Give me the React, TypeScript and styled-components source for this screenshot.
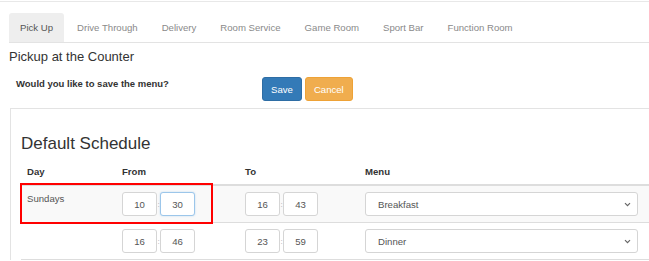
import React from 'react';
import styled, { createGlobalStyle, css } from 'styled-components';

const GlobalStyle = createGlobalStyle`
  html, body {
    margin: 0;
    padding: 0;
    background: #fff;
    overflow: hidden;
  }

  body {
    color: #333;
    font-family: "Liberation Sans", Arial, sans-serif;
    font-size: 9.6px;
  }

  * {
    box-sizing: border-box;
  }
`;

const Page = styled.div`
  border-top: 1px solid #e8e8e8;
  margin-top: 1px;
  padding-top: 11px;
  width: 660px;
`;

const TabBar = styled.ul`
  border-bottom: 1px solid #e3e3e3;
  display: flex;
  list-style: none;
  margin: 0 0 0 9px;
  padding: 0;
`;

const Tab = styled.li<{ $active?: boolean }>`
  border-radius: 3px 3px 0 0;
  color: #8a8a8a;
  height: 29px;
  line-height: 29px;
  margin-right: 2px;
  padding: 0 11px;

  ${({ $active }) => $active && css`
    background: #eee;
    color: #555;
  `}
`;

const Title = styled.h4`
  font-size: 13px;
  font-weight: normal;
  line-height: 16px;
  margin: 6px 0 0 9px;
`;

const SaveRow = styled.div`
  align-items: start;
  display: flex;
  gap: 3px;
  margin: 12px 0 0 16px;
`;

const SaveLabel = styled.span`
  font-size: 9.5px;
  font-weight: bold;
  line-height: 12px;
  padding-top: 1px;
  width: 243px;
`;

const ButtonTheme = {
  primary: css`
    background: #337ab7;
    border-color: #2e6da4;
  `,
  warning: css`
    background: #f0ad4e;
    border-color: #eea236;
  `,
};

const Button = styled.button<{ $variant: keyof typeof ButtonTheme }>`
  border: 1px solid transparent;
  border-radius: 3px;
  color: #fff;
  font: 9.6px "Liberation Sans", Arial, sans-serif;
  height: 24px;
  padding: 0 8px;
  ${({ $variant }) => ButtonTheme[$variant]}
`;

const Panel = styled.section`
  border-left: 1px solid #e3e3e3;
  border-top: 1px solid #e3e3e3;
  margin: 7px 0 0 10px;
  padding: 25px 0 0 10px;
`;

const Heading = styled.h3`
  font-size: 17px;
  font-weight: normal;
  line-height: 20px;
  margin: 0 0 5px;
`;

const TableWrap = styled.div`
  position: relative;
`;

const Table = styled.table`
  border-collapse: collapse;
  width: 630px;

  th, td {
    padding: 6px;
    text-align: left;
    vertical-align: top;
  }

  th {
    border-bottom: 2px solid #ddd;
    font-weight: bold;
    line-height: 13px;
  }

  td {
    border-bottom: 1px solid #ddd;
    color: #555;
    line-height: 13px;
  }

  tbody tr:nth-child(odd) {
    background: #f9f9f9;
  }
`;

const TimeGroup = styled.div`
  align-items: center;
  display: flex;
`;

const TimeInput = styled.input<{ $focused?: boolean }>`
  border: 1px solid #d5d5d5;
  border-radius: 3px;
  color: #555;
  font: 9.6px "Liberation Sans", Arial, sans-serif;
  height: 24px;
  padding: 0;
  text-align: center;
  width: 35px;

  ${({ $focused }) => $focused && css`
    border-color: #9cc6ea;
    box-shadow: 0 0 2px rgba(102, 175, 233, 0.4);
  `}
`;

const Colon = styled.span`
  color: #aaa;
  font-size: 8px;
  text-align: center;
  width: 3px;
`;

const SelectBox = styled.div`
  align-items: center;
  background: #fff;
  border: 1px solid #d5d5d5;
  border-radius: 3px;
  color: #555;
  display: flex;
  height: 24px;
  justify-content: space-between;
  padding: 0 6px 0 12px;
  width: 273px;
`;

const Highlight = styled.div`
  border: 2px solid #f00;
  height: 41px;
  left: -1px;
  pointer-events: none;
  position: absolute;
  top: 24px;
  width: 193px;
`;

const Chevron = () => (
  <svg width="7" height="5" viewBox="0 0 7 5">
    <path d="M1 1.2 L3.5 3.7 L6 1.2" fill="none" stroke="#666" strokeWidth="1.2" />
  </svg>
);

const tabs = ['Pick Up', 'Drive Through', 'Delivery', 'Room Service', 'Game Room', 'Sport Bar', 'Function Room'];

const rows = [
  { day: 'Sundays', from: ['10', '30'], to: ['16', '43'], menu: 'Breakfast' },
  { day: '', from: ['16', '46'], to: ['23', '59'], menu: 'Dinner' },
];

const Time = ({ values, focusSecond }: { values: string[]; focusSecond?: boolean }) => (
  <TimeGroup>
    <TimeInput readOnly value={values[0]} />
    <Colon>:</Colon>
    <TimeInput readOnly value={values[1]} $focused={focusSecond} />
  </TimeGroup>
);

const App = () => (
  <>
    <GlobalStyle />
    <Page>
      <TabBar>
        {tabs.map((t, i) => (
          <Tab key={t} $active={i === 0}>{t}</Tab>
        ))}
      </TabBar>
      <Title>Pickup at the Counter</Title>
      <SaveRow>
        <SaveLabel>Would you like to save the menu?</SaveLabel>
        <Button $variant="primary">Save</Button>
        <Button $variant="warning">Cancel</Button>
      </SaveRow>
      <Panel>
        <Heading>Default Schedule</Heading>
        <TableWrap>
          <Table>
            <colgroup>
              <col style={{ width: 95 }} />
              <col style={{ width: 123 }} />
              <col style={{ width: 120 }} />
              <col />
            </colgroup>
            <thead>
              <tr>
                <th>Day</th>
                <th>From</th>
                <th>To</th>
                <th>Menu</th>
              </tr>
            </thead>
            <tbody>
              {rows.map((r, i) => (
                <tr key={i}>
                  <td>{r.day}</td>
                  <td><Time values={r.from} focusSecond={i === 0} /></td>
                  <td><Time values={r.to} /></td>
                  <td>
                    <SelectBox>
                      {r.menu}
                      <Chevron />
                    </SelectBox>
                  </td>
                </tr>
              ))}
            </tbody>
          </Table>
          <Highlight />
        </TableWrap>
      </Panel>
    </Page>
  </>
);

export default App;
